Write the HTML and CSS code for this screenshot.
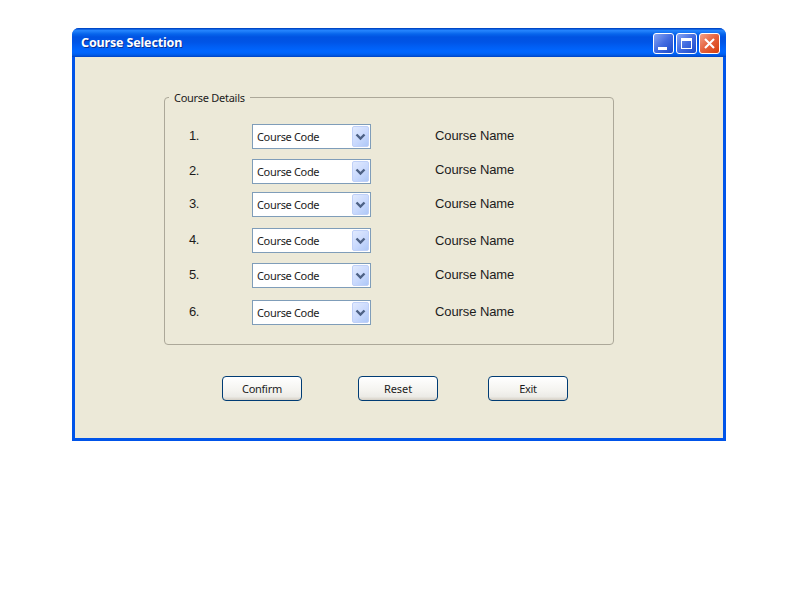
FILE: index.html
```
<!DOCTYPE html>
<html lang="en">
<head>
<meta charset="utf-8">
<title>Course Selection</title>
<link rel="stylesheet" href="styles.css">
</head>
<body>
<main class="window">
  <header class="titlebar">
    <h1>Course Selection</h1>
    <div class="controls">
      <svg class="control" viewBox="0 0 21 21" role="img" aria-label="Minimize">
        <defs>
          <linearGradient id="blue" x1="0" y1="0" x2="1" y2="1"><stop offset="0" stop-color="#8ca9f5"/><stop offset=".5" stop-color="#426be0"/><stop offset="1" stop-color="#1948c9"/></linearGradient>
          <linearGradient id="red" x1="0" y1="0" x2="1" y2="1"><stop offset="0" stop-color="#f3a58d"/><stop offset=".5" stop-color="#e5613c"/><stop offset="1" stop-color="#d53c0b"/></linearGradient>
        </defs>
        <rect x=".5" y=".5" width="20" height="20" rx="2.5" fill="url(#blue)" stroke="#fff"/>
        <path d="M5 14h9v3H5z" fill="#fff"/>
      </svg>
      <svg class="control" viewBox="0 0 21 21" role="img" aria-label="Maximize">
        <rect x=".5" y=".5" width="20" height="20" rx="2.5" fill="url(#blue)" stroke="#fff"/>
        <path d="M5 5h11v11H5zM6 8v7h9V8z" fill="#fff" fill-rule="evenodd"/>
      </svg>
      <svg class="control" viewBox="0 0 21 21" role="img" aria-label="Close">
        <rect x=".5" y=".5" width="20" height="20" rx="2.5" fill="url(#red)" stroke="#fff"/>
        <path d="M6 6l9 9M15 6l-9 9" stroke="#fff" stroke-width="2.1" fill="none"/>
      </svg>
    </div>
  </header>
  <div class="content">
    <fieldset class="details">
      <legend>Course Details</legend>
      <div class="row"><span class="number">1.</span><div class="combo"><span>Course Code</span><i class="drop"><svg viewBox="0 0 17 21"><path d="M4.5 8.5l4 4 4-4" /></svg></i></div><span class="name">Course Name</span></div>
      <div class="row"><span class="number">2.</span><div class="combo"><span>Course Code</span><i class="drop"><svg viewBox="0 0 17 21"><path d="M4.5 8.5l4 4 4-4" /></svg></i></div><span class="name raised">Course Name</span></div>
      <div class="row"><span class="number">3.</span><div class="combo"><span>Course Code</span><i class="drop"><svg viewBox="0 0 17 21"><path d="M4.5 8.5l4 4 4-4" /></svg></i></div><span class="name">Course Name</span></div>
      <div class="row"><span class="number">4.</span><div class="combo"><span>Course Code</span><i class="drop"><svg viewBox="0 0 17 21"><path d="M4.5 8.5l4 4 4-4" /></svg></i></div><span class="name lowered">Course Name</span></div>
      <div class="row"><span class="number">5.</span><div class="combo"><span>Course Code</span><i class="drop"><svg viewBox="0 0 17 21"><path d="M4.5 8.5l4 4 4-4" /></svg></i></div><span class="name">Course Name</span></div>
      <div class="row"><span class="number">6.</span><div class="combo"><span>Course Code</span><i class="drop"><svg viewBox="0 0 17 21"><path d="M4.5 8.5l4 4 4-4" /></svg></i></div><span class="name">Course Name</span></div>
    </fieldset>
    <div class="actions">
      <button>Confirm</button>
      <button>Reset</button>
      <button>Exit</button>
    </div>
  </div>
</main>
</body>
</html>
```
FILE: styles.css
```
* { box-sizing: border-box; }
body { margin: 0; background: #fff; color: #1c1c1c; font: 11px/15px "Noto Sans", sans-serif; letter-spacing: -.33px; }
.window { width: 654px; height: 413px; margin: 28px 0 0 72px; display: flow-root; background: #0054e9; border-radius: 7px 7px 0 0; }
.titlebar {
  height: 29px;
  padding: 0 6px 0 9px;
  display: flex;
  align-items: center;
  justify-content: space-between;
  border-radius: 7px 7px 0 0;
  background: linear-gradient(#0048c8 0, #0048c8 1px, #2584ff 2px, #2282fb 3px, #0765ec 6px, #0053e2 9px, #0054e6 14px, #005ff5 19px, #0066ff 23px, #0064fb 25px, #005be8 27px, #0042c2 29px);
}
h1 { margin: 0; color: #fff; font-size: 12.5px; line-height: 20px; font-weight: 700; letter-spacing: -.15px; text-shadow: 1px 1px #0a3093; }
.controls { display: flex; gap: 2px; padding-top: 2px; }
.control { width: 21px; height: 21px; display: block; }
.content { height: 381px; margin: 0 3px 3px; display: flow-root; background: #ece9d8; }
.details { width: 450px; height: 255px; margin: 33px 0 0 89px; padding: 19px 0 0 24px; border: 1px solid #aca899; border-radius: 4px; }
legend { height: 15px; margin-left: -20px; padding: 0 5px; line-height: 15px; letter-spacing: -.28px; }
.row { display: grid; grid-template-columns: 63px 119px 1fr; grid-template-rows: 25px; height: 25px; margin-bottom: 10px; }
.row:nth-of-type(2) { margin-bottom: 8px; }
.row:nth-of-type(3) { margin-bottom: 11px; }
.row:nth-of-type(5) { margin-bottom: 12px; }
.number, .name { font: 13px/24px "Liberation Sans", Arial, sans-serif; letter-spacing: -.09px; }
.number { letter-spacing: -.4px; }
.name { padding-left: 64px; }
.raised { margin-top: -1px; }
.lowered { margin-top: 1px; }
.combo { display: flex; justify-content: space-between; padding: 1px 1px 1px 4px; background: #fff; border: 1px solid #7f9db9; line-height: 21px; }
.drop { width: 17px; height: 21px; border: 1px solid #bfd0f8; border-radius: 2px; background: linear-gradient(135deg, #e1eafe, #c9d9fd 55%, #aec8f7); }
.drop svg { display: block; width: 17px; height: 21px; margin: -1px; fill: none; stroke: #4d6185; stroke-width: 2.4; }
.actions { display: flex; margin: 31px 0 0 147px; }
button { width: 80px; height: 25px; padding: 0; border: 1px solid #003c74; border-radius: 4px; color: inherit; font: inherit; letter-spacing: -.28px; background: linear-gradient(#fff, #f4f3ef 60%, #ecebe6 85%, #d6d0c5); }
button:nth-child(2) { margin-left: 56px; letter-spacing: -.05px; }
button:nth-child(3) { margin-left: 50px; }
```
